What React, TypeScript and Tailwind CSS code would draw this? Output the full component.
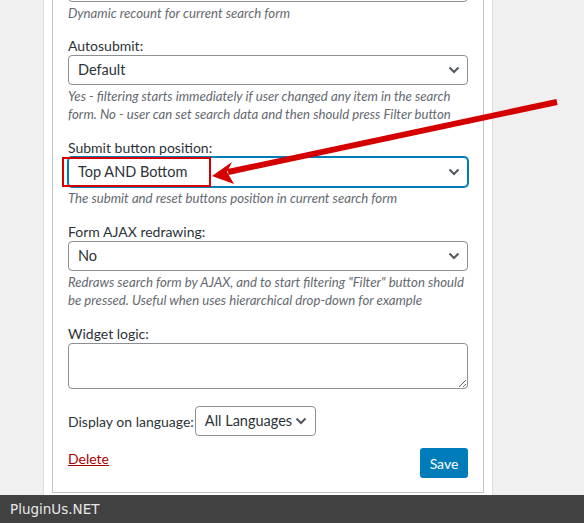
import React from "react";

const font = { fontFamily: 'Lato, "Open Sans", sans-serif' };

function Chevron() {
  return (
    <svg width="12" height="8" viewBox="0 0 12 8" className="shrink-0">
      <polyline points="1.5,1.5 6,6 10.5,1.5" fill="none" stroke="#50575e" strokeWidth="2" />
    </svg>
  );
}

function Select({ value, focused = false, className = "" }: { value: string; focused?: boolean; className?: string }) {
  return (
    <div
      className={
        "flex h-[30px] items-center justify-between whitespace-nowrap rounded-[4px] bg-white pl-[9px] pr-[7px] text-[14.5px] text-[#2c3338] " +
        (focused ? "border border-[#007cba] shadow-[0_0_0_1px_#007cba] " : "border border-[#8c8f94] ") +
        className
      }
    >
      <span>{value}</span>
      <Chevron />
    </div>
  );
}

function Label({ children }: { children: React.ReactNode }) {
  return <div className="text-[14px] leading-[19px] text-[#2c3338]">{children}</div>;
}

function Desc({ lines }: { lines: string[] }) {
  return (
    <div className="mt-[2px] text-[13.2px] italic leading-[18px] text-[#646970]">
      {lines.map((l) => (
        <div key={l} className="whitespace-nowrap">
          {l}
        </div>
      ))}
    </div>
  );
}

export default function App() {
  return (
    <div className="relative h-[523px] w-[584px] overflow-hidden bg-[#f0f0f1]" style={font}>
      <div className="flex h-[495px] pl-[43px]">
        <div className="h-full w-[450px] border-x border-[#dcdcde] bg-white pl-[8px]">
          <div className="w-[432px] border border-t-0 border-[#c3c4c7] px-[15px] pb-[14px]">
            {/* cropped field above */}
            <div className="mt-[-28px] h-[30px] rounded-[4px] border border-[#8c8f94]" />
            <Desc lines={["Dynamic recount for current search form"]} />

            <div className="mt-[14px]">
              <Label>Autosubmit:</Label>
              <Select value="Default" />
              <Desc
                lines={[
                  "Yes - filtering starts immediately if user changed any item in the search",
                  "form. No - user can set search data and then should press Filter button",
                ]}
              />
            </div>

            <div className="mt-[15px]">
              <Label>Submit button position:</Label>
              <div className="relative">
                <Select value="Top AND Bottom" focused />
                <div className="absolute left-[-6px] top-0 h-[30px] w-[149px] border-2 border-[#d40000]" />
              </div>
              <Desc lines={["The submit and reset buttons position in current search form"]} />
            </div>

            <div className="mt-[15px]">
              <Label>Form AJAX redrawing:</Label>
              <Select value="No" />
              <Desc
                lines={[
                  'Redraws search form by AJAX, and to start filtering "Filter" button should',
                  "be pressed. Useful when uses hierarchical drop-down for example",
                ]}
              />
            </div>

            <div className="mt-[15px]">
              <Label>Widget logic:</Label>
              <textarea
                className="block h-[46px] w-full resize-y rounded-[4px] border border-[#8c8f94] bg-white outline-none"
                style={font}
              />
            </div>

            <div className="mt-[17px] flex items-center gap-[1px] text-[14px] text-[#2c3338]">
              <span className="pt-[1px]">Display on language:</span>
              <Select value="All Languages" className="w-[121px] !pr-[8px]" />
            </div>

            <div className="mt-[12px] flex items-start justify-between">
              <a href="#" className="mt-[0px] text-[14px] text-[#aa0000] underline">
                Delete
              </a>
              <button className="h-[30px] w-[48px] rounded-[3px] bg-[#007cba] text-[14px] text-white">Save</button>
            </div>
          </div>
        </div>
      </div>

      <div
        className="flex h-[28px] items-center bg-[#414141] pl-[10px] text-[13.5px] text-[#e8e8e8]"
        style={{ fontFamily: '"DejaVu Sans", sans-serif' }}
      >
        PluginUs.NET
      </div>

      {/* annotation arrow */}
      <svg className="pointer-events-none absolute inset-0" width="584" height="523" viewBox="0 0 584 523">
        <line x1="557" y1="102" x2="228" y2="172" stroke="#d40000" strokeWidth="6" />
        <polygon points="212,176 232,162 227,172 234,184" fill="#d40000" />
      </svg>
    </div>
  );
}
